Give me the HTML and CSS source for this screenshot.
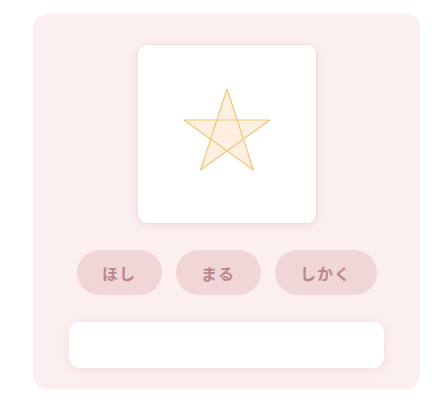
FILE: index.html
```html
<!DOCTYPE html>
<html lang="ja">
<head>
<meta charset="utf-8">
<link rel="stylesheet" href="styles.css">
</head>
<body>
<div class="card">
  <div class="preview">
    <svg class="star" width="180" height="180" viewBox="0 0 180 180">
      <polygon points="90,45 116.5,126 47,76 133,76 63.5,126" fill="#fdefe1" stroke="#f1c777" stroke-width="1.2" stroke-linejoin="round"/>
    </svg>
  </div>
  <div class="buttons">
    <button class="pill w85">ほし</button>
    <button class="pill w85">まる</button>
    <button class="pill w102">しかく</button>
  </div>
  <div class="answer"></div>
</div>
</body>
</html>
```
FILE: styles.css
```css
html, body {
  margin: 0;
  padding: 0;
  background: #ffffff;
}
body {
  padding: 14px 0 0 33px;
  font-family: "Noto Sans CJK JP", "Noto Sans", sans-serif;
}
.card {
  width: 387px;
  height: 375px;
  box-sizing: border-box;
  background: #fcefef;
  border-radius: 14px;
  padding-top: 30px;
  display: flex;
  flex-direction: column;
  align-items: center;
}
.preview {
  width: 180px;
  height: 180px;
  box-sizing: border-box;
  background: #ffffff;
  border-radius: 10px;
  border: 1px solid #f3dcdc;
  box-shadow: 0 2px 6px rgba(225, 170, 170, 0.25);
  display: flex;
}
.star {
  display: block;
  margin: -1px;
}
.buttons {
  display: flex;
  gap: 14px;
  margin-top: 26px;
}
.pill {
  height: 45px;
  border: none;
  border-radius: 23px;
  background: #f1d6d8;
  color: #ba868b;
  font-family: "Noto Sans CJK JP", sans-serif;
  font-weight: 700;
  font-size: 16px;
  letter-spacing: 1px;
  padding: 0;
}
.w85 { width: 85px; }
.w102 { width: 102px; }
.answer {
  margin-top: 27px;
  width: 315px;
  height: 46px;
  background: #ffffff;
  border-radius: 11px;
  box-shadow: 0 2px 8px rgba(225, 170, 170, 0.25);
}
```
